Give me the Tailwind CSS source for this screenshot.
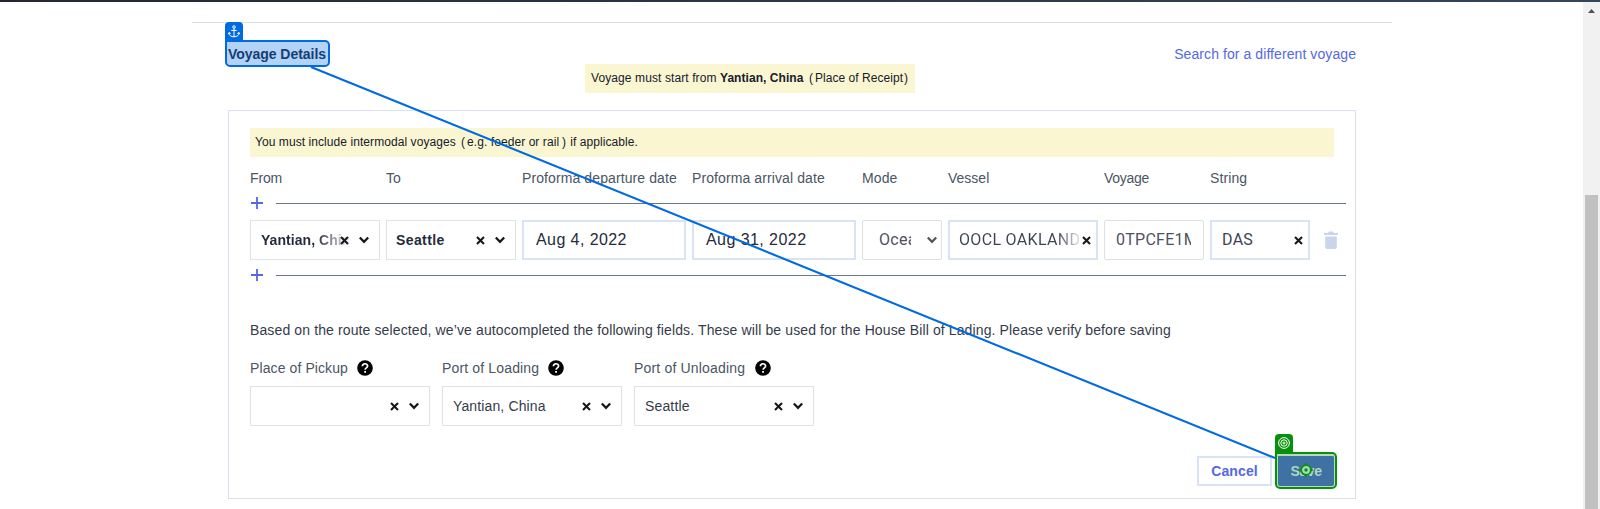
<!DOCTYPE html>
<html lang="en">
<head>
<meta charset="utf-8">
<title>Voyage Details</title>
<script src="https://cdn.jsdelivr.net/npm/@tailwindcss/browser@4"></script>
</head>
<body class="relative h-[509px] w-[1600px] overflow-hidden bg-white font-['Liberation_Sans',sans-serif] text-sm leading-5 text-[#242b3a]">
<svg class="hidden">
  <symbol id="x" viewBox="0 0 9 9"><path d="M1 1l7 7M8 1l-7 7" stroke="#16181d" stroke-width="2.1" fill="none"/></symbol>
  <symbol id="chev" viewBox="0 0 10 8"><path d="M.8 1.500l4.200 4.300 4.200-4.300" stroke="currentColor" stroke-width="2.300" fill="none"/></symbol>
  <symbol id="plus" viewBox="0 0 12 12"><path d="M6 0v12M0 6h12" stroke="#5468e4" stroke-width="1.8"/></symbol>
  <symbol id="help" viewBox="0 0 16 16"><circle cx="8" cy="8" r="7.8" fill="#000"/><path d="M5.4 6.3C5.4 2.9 10.6 3 10.6 6c0 1.9-2.5 1.9-2.5 3.8" stroke="#fff" stroke-width="1.7" fill="none"/><path d="M7.2 11h1.8v1.8H7.2z" fill="#fff"/></symbol>
</svg>
<div class="flex h-full flex-col">
  <div class="h-[2px] shrink-0 bg-gradient-to-r from-[#242733] to-[#34465a]"></div>
  <div class="flex min-h-0 flex-1">
    <main class="flex-1 pt-5 pl-48">
      <div class="h-[477px] w-[1200px] border-t border-[#dcdee1] px-9">
        <div class="flex h-[41px] items-end justify-between pt-[21px]">
          <h2 class="h-5 font-bold tracking-[-0.04px] text-[#1c2b45]">Voyage Details</h2>
          <a class="h-5 tracking-[0.08px] text-[#5468e4]">Search for a different voyage</a>
        </div>
        <div class="ml-[357px] flex h-[29px] w-[330px] items-center bg-[#faf6d1] pb-px pl-[6px] text-xs whitespace-pre text-[#16202b]"><span class="w-[129px] tracking-[0.1px]">Voyage must start from </span><b class="w-[84px] tracking-[0.05px]">Yantian, China</b><span class="ml-[5px]">(</span><span class="ml-[2px] w-[88px] tracking-[0.04px]">Place of Receipt</span><span class="ml-px">)</span></div>

        <section class="mt-[17px] h-[389px] w-[1128px] border border-[#d9e1f2] pt-[17px] pl-[21px]">
          <div class="flex h-[29px] w-[1084px] items-center bg-[#faf6d1] pb-px pl-[5px] text-xs whitespace-nowrap tracking-[0.07px] text-[#16202b]"><span class="w-[202px]">You must include intermodal voyages</span><span class="ml-[4px]">(</span><span class="ml-[2px] w-[93px]">e.g. feeder or rail</span><span class="ml-[2px]">)</span><span class="ml-1">if applicable.</span></div>

          <div class="mt-[11px] grid h-5 grid-cols-[130px_130px_164px_164px_80px_150px_100px_100px] gap-x-[6px] tracking-[0.1px] whitespace-nowrap text-[#4a5565]">
            <span class="tracking-[-0.15px]">From</span><span>To</span><span>Proforma departure date</span><span>Proforma arrival date</span><span>Mode</span><span class="tracking-normal">Vessel</span><span class="tracking-[-0.3px]">Voyage</span><span>String</span>
          </div>

          <div class="mt-[9px] flex h-3 w-[1096px] items-center justify-between pl-px">
            <svg class="size-3"><use href="#plus"/></svg><div class="h-px w-[1070px] bg-[#6b7688]"></div>
          </div>

          <div class="mt-[11px] flex h-10 items-stretch gap-[6px]">
            <div class="flex w-[130px] items-center justify-between border border-[#e1e2e4] pr-[10px] pl-[10px] font-bold tracking-[0.05px]">
              <span class="relative h-5 w-[78px]">
                <span class="absolute top-0 left-0 w-[100px] bg-gradient-to-r from-[#242b3a] from-55% to-transparent to-90% bg-clip-text whitespace-nowrap text-transparent">Yantian, China</span>
              </span>
              <span class="relative flex items-center gap-[10px]"><svg class="size-[9px]"><use href="#x"/></svg><svg class="h-2 w-[10px] text-[#16181d]"><use href="#chev"/></svg></span>
            </div>
            <div class="flex w-[130px] items-center justify-between border border-[#e1e2e4] pr-[10px] pl-[9px] font-bold tracking-[0.4px]">
              <span>Seattle</span>
              <span class="flex items-center gap-[10px]"><svg class="size-[9px]"><use href="#x"/></svg><svg class="h-2 w-[10px] text-[#16181d]"><use href="#chev"/></svg></span>
            </div>
            <div class="flex w-[164px] items-center border-2 border-[#d9e3f6] pl-3 text-base tracking-[0.42px]">Aug 4, 2022</div>
            <div class="flex w-[164px] items-center border-2 border-[#d9e3f6] pl-3 text-base tracking-[0.44px]">Aug 31, 2022</div>
            <div class="flex w-20 items-center justify-between rounded-[2px] border border-[#dfe0e3] pr-1 pl-4 font-['Roboto',sans-serif] text-base text-[#4d5260]">
              <span class="w-8 overflow-hidden tracking-[0.3px]">Ocean</span>
              <svg class="h-2 w-[10px] text-[#54575c]"><use href="#chev"/></svg>
            </div>
            <div class="relative flex w-[150px] items-center border-2 border-[#d9e3f6] pl-[9px] font-['Roboto',sans-serif] text-base tracking-[0.32px] text-[#3d4353]">
              <span class="bg-gradient-to-r from-[#3d4353] from-80% to-[#3d4353]/15 bg-clip-text whitespace-nowrap text-transparent">OOCL OAKLAND</span>
              <svg class="absolute top-[14px] right-[5px] size-[9px]"><use href="#x"/></svg>
            </div>
            <div class="flex w-[100px] items-center rounded-[2px] border border-[#dfe0e3] pl-[11px] font-['Roboto',sans-serif] text-base text-[#4d5260]">
              <span class="w-[75px] overflow-hidden tracking-[0.25px]">0TPCFE1MA</span>
            </div>
            <div class="flex w-[100px] items-center justify-between border-2 border-[#d9e3f6] pr-[5px] pl-[10px] font-['Roboto',sans-serif] text-base tracking-[0.3px] text-[#3d4353]">DAS<svg class="mt-[1px] size-[9px]"><use href="#x"/></svg></div>
            <svg class="mt-[11px] ml-2 h-[18px] w-[14px]" viewBox="0 0 14 18" fill="#c9d5eb"><path d="M0 2h4l1-1.6h4L10 2h4v2H0zM1.2 5.6h11.6V16a2 2 0 0 1-2 2H3.2a2 2 0 0 1-2-2z"/></svg>
          </div>

          <div class="mt-[9px] flex h-3 w-[1096px] items-center justify-between pl-px">
            <svg class="size-3"><use href="#plus"/></svg><div class="h-px w-[1070px] bg-[#6b7688]"></div>
          </div>

          <p class="mt-[39px] h-5 tracking-[0.12px] whitespace-nowrap text-[#353b4b]">Based on the route selected, we’ve autocompleted the following fields. These will be used for the House Bill of Lading. Please verify before saving</p>

          <div class="mt-[18px] flex gap-3 text-[#353b4b]">
            <div class="w-[180px]">
              <div class="flex h-5 items-center gap-[9px] text-[#4a5565]"><span class="w-[98px] tracking-[0.1px] whitespace-nowrap">Place of Pickup</span><svg class="size-4"><use href="#help"/></svg></div>
              <div class="mt-2 flex h-10 items-center justify-end gap-[10px] border border-[#e1e2e4] pr-[10px]"><svg class="size-[9px]"><use href="#x"/></svg><svg class="h-2 w-[10px] text-[#16181d]"><use href="#chev"/></svg></div>
            </div>
            <div class="w-[180px]">
              <div class="flex h-5 items-center gap-[9px] text-[#4a5565]"><span class="w-[97px] tracking-[0.15px] whitespace-nowrap">Port of Loading</span><svg class="size-4"><use href="#help"/></svg></div>
              <div class="mt-2 flex h-10 items-center gap-[10px] border border-[#e1e2e4] px-[10px]"><span class="mr-auto tracking-[0.13px]">Yantian, China</span><svg class="size-[9px]"><use href="#x"/></svg><svg class="h-2 w-[10px] text-[#16181d]"><use href="#chev"/></svg></div>
            </div>
            <div class="w-[180px]">
              <div class="flex h-5 items-center gap-[9px] text-[#4a5565]"><span class="w-[112px] tracking-[0.18px] whitespace-nowrap">Port of Unloading</span><svg class="size-4"><use href="#help"/></svg></div>
              <div class="mt-2 flex h-10 items-center gap-[10px] border border-[#e1e2e4] px-[10px]"><span class="mr-auto tracking-[0.15px]">Seattle</span><svg class="size-[9px]"><use href="#x"/></svg><svg class="h-2 w-[10px] text-[#16181d]"><use href="#chev"/></svg></div>
            </div>
          </div>

          <div class="mt-[30px] ml-[947px] flex gap-[6px] font-bold">
            <button class="h-[30px] w-[75px] border-2 border-[#d9e3f6] tracking-[0.12px] text-[#5468e4]">Cancel</button>
            <button class="h-[30px] w-14 bg-[#4071a5] tracking-[-0.4px] text-[#a9d8bb]">Save</button>
          </div>
        </section>
      </div>
    </main>
    <div class="flex w-[17px] flex-col items-center bg-[#f1f1f1] pt-[7px]">
      <svg class="h-1 w-[7px]" viewBox="0 0 7 4"><path d="M0 4L3.5 0 7 4z" fill="#505050"/></svg>
      <div class="mt-[182px] w-[13px] flex-1 bg-[#c1c1c1]"></div>
    </div>
  </div>
</div>

<!-- Anchor and target annotations laid over the form -->
<svg class="absolute inset-0 h-[509px] w-[1600px]"><path d="M311 67L1275 458" stroke="#006ae3" stroke-width="2.100"/></svg>
<div class="absolute top-10 left-[225px] h-[27px] w-[105px] rounded-[5px] rounded-tl-none border-2 border-[#006ae3] bg-[#006ae3]/30"></div>
<div class="absolute top-[22px] left-[225px] flex h-[19px] w-[18px] justify-center rounded-t-[4px] bg-[#006ae3] pt-[3px]">
  <svg class="h-[13px] w-3" viewBox="0 0 12 13" fill="none" stroke="#fff"><circle cx="6" cy="2" r="1.3"/><path d="M6 3.3V12M3.2 5.400h5.600M1 7.600C1 10.500 3.200 11.800 6 11.800s5-1.300 5-4.200M.4 9.200L1.100 7.500l1.500 1M11.600 9.200L10.900 7.500l-1.500 1"/></svg>
</div>
<div class="absolute top-[452px] left-[1275px] h-[37px] w-[62px] rounded-[5px] rounded-tl-none border-2 border-[#06900c] shadow-[inset_0_0_0_1px_#b4dcb6,inset_0_2px_0_0_#b4dcb6]"></div>
<div class="absolute top-[434px] left-[1275px] flex h-[19px] w-[18px] justify-center rounded-t-[4px] bg-[#06900c] pt-[3px]">
  <svg class="size-3" viewBox="0 0 12 12" fill="none" stroke="#fff"><circle cx="6" cy="6" r="5.400"/><circle cx="6" cy="6" r="3.200"/><circle cx="6" cy="6" r="1"/></svg>
</div>
<svg class="absolute top-[463px] left-[1299px] size-[14px]" viewBox="0 0 14 14" fill="none" stroke="#06900c" stroke-width="1.700"><circle cx="7" cy="7" r="4.800" fill="#a9d8bb"/><path d="M7 0v3M7 11v3M0 7h3M11 7h3"/><circle cx="7" cy="7" r="1.700" fill="#06900c" stroke="none"/></svg>
</body>
</html>
